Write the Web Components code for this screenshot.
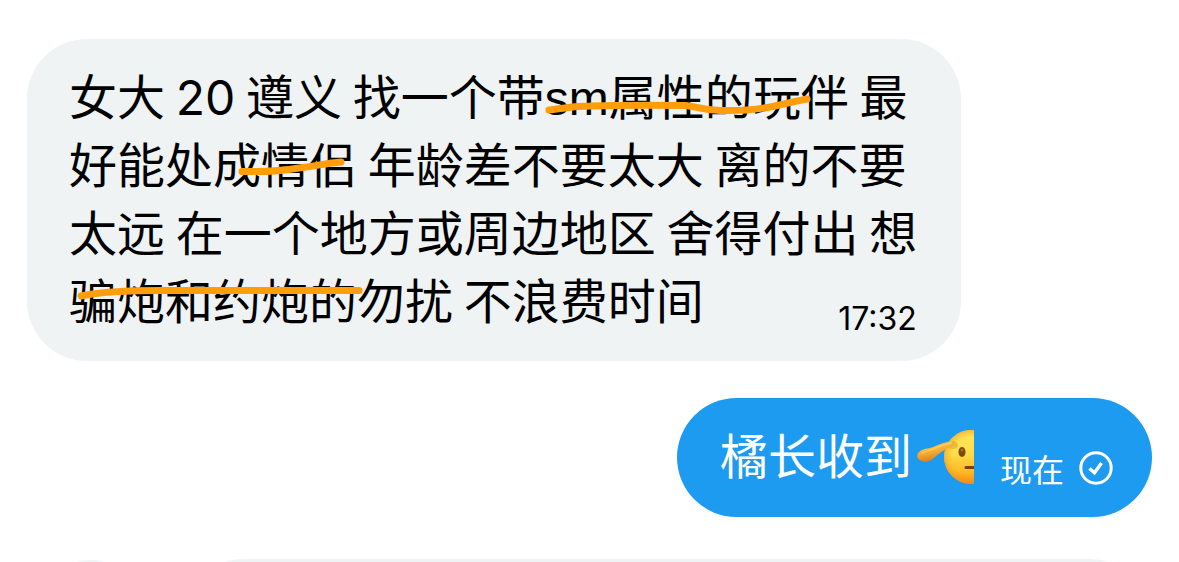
<!DOCTYPE html>
<html lang="zh-CN">
<head>
<meta charset="utf-8">
<meta name="viewport" content="width=device-width, initial-scale=1">
<title>私信</title>
<style>
body { margin: 0; background: #fff; font-family: "Noto Sans CJK SC", sans-serif; }
</style>
</head>
<body>
<chat-thread>
  <chat-bubble>女大 <latin-text>20</latin-text> 遵义 找一个带<latin-text class="word">sm</latin-text>属性的玩伴 最<wbr>好能处成情侣 年龄差不要太大 离的不要<wbr>太远 在一个地方或周边地区 舍得付出 想<wbr>骗炮和约炮的勿扰 不浪费时间<time slot="meta" datetime="17:32">17:32</time><marker-strokes slot="marks"></marker-strokes></chat-bubble>
  <chat-bubble sent>橘长收到<salute-face></salute-face><span slot="meta">现在</span><sent-check slot="meta"></sent-check></chat-bubble>
  <next-message></next-message>
</chat-thread>
<script>
function define(name, markup) {
  const template = document.createElement('template');
  template.innerHTML = markup.trim();
  customElements.define(name, class extends HTMLElement {
    constructor() {
      super();
      this.attachShadow({ mode: 'open' }).append(template.content.cloneNode(true));
    }
  });
}

define('chat-thread', `
<style>
  :host { display: flex; flex-direction: column; box-sizing: border-box; height: 100vh; overflow: hidden; padding: 39px 27px 0; gap: 37px; text-autospace: no-autospace; }
</style>
<slot></slot>`);

define('chat-bubble', `
<style>
  :host { position: relative; display: grid; flex: none; box-sizing: border-box; align-self: flex-start; max-width: 83%; padding: 21px 40px 22px 42px; border-radius: 60px; background: #eff3f4; color: #000; }
  :host([sent]) { display: flex; align-items: flex-end; gap: 26px; align-self: flex-end; padding: 21px 39px 23px 43px; background: #1d9bf0; color: #fff; }
  p { grid-area: 1 / 1; margin: 0; padding-bottom: 7px; font-size: 48px; line-height: 68px; }
  .meta { grid-area: 1 / 1; align-self: end; justify-self: end; display: flex; align-items: center; gap: 15px; padding-right: 4px; font-size: 32px; line-height: 40px; }
  :host([sent]) .meta { align-self: flex-end; padding: 0 0 6px; }
  ::slotted(time) { font-family: Inter, sans-serif; }
</style>
<p><slot></slot></p>
<div class="meta"><slot name="meta"></slot></div>
<slot name="marks"></slot>`);

define('latin-text', `
<style>
  :host { display: inline; font-family: Inter, sans-serif; line-height: 48px; }
  :host(.word) { font-family: "Liberation Sans", sans-serif; }
</style><slot></slot>`);

define('marker-strokes', `
<style>
  :host { position: absolute; inset: 0; pointer-events: none; }
  svg { display: block; width: 100%; height: 100%; }
</style>
<svg viewBox="27 39 933 322" preserveAspectRatio="xMinYMin" fill="none" stroke="#ff9d0a" stroke-width="7" stroke-linecap="round" stroke-linejoin="round" aria-hidden="true">
  <path d="M549 110C562 109 572 106 590 106C622 105 655 105 686 105.500C697 107 704 110 720 110.500C738 111 757 110 775 106C788 103 797 101 807 99"/>
  <path d="M242 171.500C263 172 282 171 299 168C315 166 328 163 341 162"/>
  <path d="M81 296C99 292 130 290.500 162 290.500C226 290 292 291 359 290.500"/>
</svg>`);

define('salute-face', `
<style>
  :host { display: inline-block; width: 57px; height: 54px; margin-left: 5px; vertical-align: -10px; line-height: 0; }
  svg { display: block; }
</style>
<svg width="57" height="54" viewBox="0 0 57 54" role="img" aria-label="敬礼">
  <defs>
    <linearGradient id="face" x1="0" y1="0" x2="0" y2="1"><stop offset="0" stop-color="#ffe85a"/><stop offset=".45" stop-color="#ffdb48"/><stop offset=".78" stop-color="#ffb824"/><stop offset="1" stop-color="#f58b16"/></linearGradient>
    <radialGradient id="edge" cx=".5" cy=".5" r=".5"><stop offset=".72" stop-color="#f39a1c" stop-opacity="0"/><stop offset="1" stop-color="#ef8d16" stop-opacity=".5"/></radialGradient>
    <linearGradient id="arm" x1="0" y1="0" x2="0.3" y2="1"><stop offset="0" stop-color="#ffcf50"/><stop offset=".6" stop-color="#f6aa35"/><stop offset="1" stop-color="#dc7f14"/></linearGradient>
  </defs>
  <circle cx="54" cy="27" r="27" fill="url(#face)"/>
  <circle cx="54" cy="27" r="27" fill="url(#edge)"/>
  <ellipse cx="36" cy="15" rx="5" ry="4" fill="#d99324" opacity=".45"/>
  <path d="M35 11C36 13 35 15 33 17C27 20 22 23 18 27C14 31 9 33 5 31C0 30-1 25 2 22C6 18 11 19 16 17C22 14 29 12 35 11Z" fill="url(#arm)"/>
  <path d="M5 23C11 20 16 20 21 17C26 15 30 14 34 13" fill="none" stroke="#ffd967" stroke-width="1.500" stroke-linecap="round" opacity=".7"/>
  <ellipse cx="45" cy="22" rx="3.500" ry="5" fill="#7b4a0b"/>
  <ellipse cx="45" cy="20" rx="1.500" ry="1.500" fill="#a4752a"/>
  <path d="M49 37.500H57" stroke="#7b4308" stroke-width="3" stroke-linecap="round"/>
</svg>`);

define('sent-check', `
<style>:host { display: block; } svg { display: block; }</style>
<svg width="34" height="34" viewBox="0 0 34 34" fill="none" stroke="#fff" stroke-width="3" role="img" aria-label="已发送">
  <circle cx="17" cy="17" r="15.200"/>
  <path d="M10.500 17.500L15.500 21.800L22.500 12" stroke-width="3.400"/>
</svg>`);

define('next-message', `
<style>
  :host { display: flex; flex: none; gap: 38px; padding: 5px 3px 0 7px; }
  .avatar { flex: none; width: 112px; height: 112px; margin-top: 1px; border-radius: 50%; background: #eff3f4; }
  .bubble { flex: 1; height: 118px; border-radius: 60px; background: #eff3f4; }
</style>
<div class="avatar"></div>
<div class="bubble"></div>`);
</script>
</body>
</html>
